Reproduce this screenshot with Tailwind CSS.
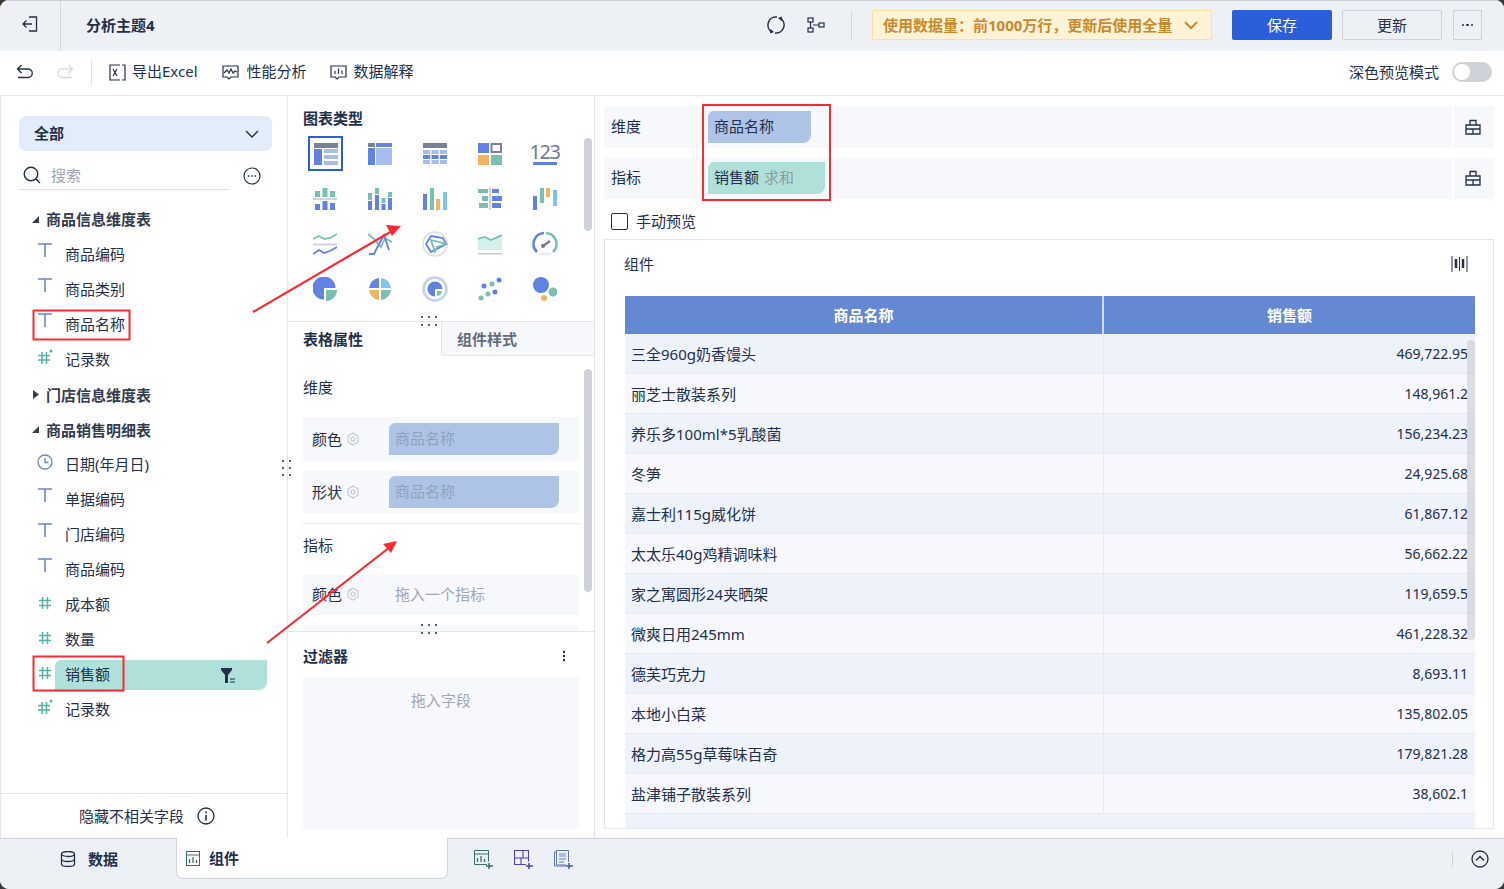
<!DOCTYPE html>
<html lang="zh">
<head>
    <meta charset="UTF-8">
    <title>分析主题4</title>
    <script src="https://cdn.jsdelivr.net/npm/@tailwindcss/browser@4"></script>
</head>
<body class="bg-[#3a3a3a] overflow-hidden">
<div class="relative w-[1504px] h-[889px] flex flex-col overflow-hidden rounded-[9px] bg-white text-[15px] leading-[20px] text-[#232f4b] [font-family:'Noto_Sans','Noto_Sans_CJK_SC',sans-serif]">

    <!-- top bar -->
    <div class="h-[51px] shrink-0 flex items-center bg-[#edf0f5] border-t border-[#c9ccd3]">
        <div class="w-[61px] h-full flex items-center justify-center pb-[4px] border-r border-[#d5d8e0]">
            <svg width="18" height="18" viewBox="0 0 18 18" fill="none" stroke="#232f4b" stroke-width="1.3"><path d="M8 2h7.500v14H8"/><path d="M11 9H2M5.500 5.500 2 9l3.500 3.500"/></svg>
        </div>
        <div class="ml-[25px] -mt-[2px] font-bold">分析主题4</div>
        <div class="ml-auto -mt-[2px] flex items-center">
            <svg width="20" height="20" viewBox="0 0 20 20"><g fill="none" stroke="#232f4b" stroke-width="1.500"><path d="M11 2.100A8 8 0 0 0 6 17"/><path d="M9 17.900A8 8 0 0 0 14 3"/></g><path d="m4.500 14 3.500 3-4 1.500zM15.500 6 12 3l4-1.500z" fill="#232f4b"/></svg>
            <svg class="ml-[21px]" width="18" height="18" viewBox="0 0 18 18" fill="none" stroke="#232f4b" stroke-width="1.200"><rect x="1" y="2" width="5" height="4"/><rect x="1" y="12" width="5" height="4"/><rect x="12" y="7" width="5" height="4"/><path d="M3.500 6v6M6 9h6"/></svg>
            <div class="ml-[26px] w-px h-[29px] bg-[#d5d8e0]"></div>
            <div class="ml-[20px] w-[340px] h-[30px] flex items-center justify-between pl-[10px] pr-[13px] bg-[#fef3d6] border border-[#fcdf9c] rounded-[2px] font-bold text-[#c98a2e]">
                <span>使用数据量：前1000万行，更新后使用全量</span>
                <svg width="14" height="9" viewBox="0 0 14 9" fill="none" stroke="#c98a2e" stroke-width="2"><path d="m1 1 6 6 6-6"/></svg>
            </div>
            <div class="ml-[20px] w-[100px] h-[30px] flex items-center justify-center bg-[#2b5fd9] rounded-[2px] text-white">保存</div>
            <div class="ml-[10px] w-[100px] h-[30px] flex items-center justify-center border border-[#ced2da] rounded-[2px]">更新</div>
            <div class="ml-[11px] mr-[22px] w-[29px] h-[30px] flex items-center justify-center gap-[2px] border border-[#ced2da]">
                <span class="size-[2.5px] bg-[#232f4b] rounded-full"></span><span class="size-[2.5px] bg-[#232f4b] rounded-full"></span><span class="size-[2.5px] bg-[#232f4b] rounded-full"></span>
            </div>
        </div>
    </div>

    <!-- toolbar -->
    <div class="h-[45px] shrink-0 flex items-center border-b border-[#e3e5ec] pl-[16px] pb-[2px]">
        <svg width="18" height="16" viewBox="0 0 18 16" fill="none" stroke="#232f4b" stroke-width="1.400"><path d="M5.500 1 1.500 5l4 4M2 5h10a4 4 0 0 1 0 8.500H2"/></svg>
        <svg class="ml-[22px]" width="18" height="16" viewBox="0 0 18 16" fill="none" stroke="#d9dce3" stroke-width="1.400"><path d="m12.500 1 4 4-4 4M16 5H6a4 4 0 0 0 0 8.500h10"/></svg>
        <div class="ml-[17px] w-px h-[25px] bg-[#dfe2e8]"></div>
        <svg class="ml-[17px]" width="17" height="17" viewBox="0 0 17 17" fill="none" stroke="#232f4b" stroke-width="1.200"><path d="M11 1H1v15h10M13 1h3v15h-3"/><path d="m4 5 4 7M8 5l-4 7"/></svg>
        <span class="ml-[6px] -mt-[2px]">导出Excel</span>
        <svg class="ml-[24px]" width="17" height="17" viewBox="0 0 17 17" fill="none" stroke="#232f4b" stroke-width="1.200"><path d="M5 13H1V2h15v11H9l-2 2z"/><path d="m2 9 3-3 2 3 2-4 2 4 2-2 2 1"/></svg>
        <span class="ml-[8px] -mt-[2px]">性能分析</span>
        <svg class="ml-[23px]" width="17" height="17" viewBox="0 0 17 17" fill="none" stroke="#232f4b" stroke-width="1.200"><path d="M5 13H1V2h15v11H9l-2 2z"/><path d="M5 7v3M8.500 4.500V10M12 6.500V10"/></svg>
        <span class="ml-[7px] -mt-[2px]">数据解释</span>
        <span class="ml-auto">深色预览模式</span>
        <div class="ml-[13px] mr-[12px] w-[40px] h-[20px] rounded-full bg-[#cfd2d8] flex items-center pl-[2px]"><div class="size-[16px] rounded-full bg-white"></div></div>
    </div>

    <!-- main -->
    <div class="flex-1 min-h-0 flex">

        <!-- field list -->
        <div class="w-[288px] shrink-0 flex flex-col border-r border-l border-[#e3e5ec]">
            <div class="ml-[18px] mt-[20px] w-[253px] h-[35px] shrink-0 flex items-center justify-between pl-[15px] pr-[13px] bg-[#e3ecfb] rounded-[7px] font-bold">
                <span class="-mt-[2px]">全部</span>
                <svg width="14" height="8" viewBox="0 0 14 8" fill="none" stroke="#232f4b" stroke-width="1.400"><path d="m1 1 6 6 6-6"/></svg>
            </div>
            <div class="flex shrink-0 items-center">
                <div class="ml-[17px] w-[212px] h-[39px] flex items-center border-b border-[#dfe1ea] pl-[5px] pt-[10px]">
                    <svg width="18" height="18" viewBox="0 0 18 18" fill="none" stroke="#232f4b" stroke-width="1.400"><circle cx="8" cy="8" r="6.800"/><path d="m13 13 4 4"/></svg>
                    <span class="ml-[10px] text-[#a0a6b3]">搜索</span>
                </div>
                <svg class="ml-[13px] mt-[10px]" width="18" height="18" viewBox="0 0 18 18" fill="none" stroke="#232f4b" stroke-width="1.200"><circle cx="9" cy="9" r="8"/><path d="M5 9h1.500M8.300 9h1.500M11.500 9H13" stroke-width="1.500"/></svg>
            </div>
            <div class="mt-[12px] flex flex-col">
                <div class="h-[34px] flex items-center pl-[31px] font-bold text-[#333c50]">
                    <svg width="7" height="7" viewBox="0 0 7 7"><path d="M7 0v7H0z" fill="#333c50"/></svg><span class="ml-[7px]">商品信息维度表</span>
                </div>
                <div class="h-[35px] flex items-center pl-[36px]">
                    <svg class="-mt-[8px]" width="16" height="14" viewBox="0 0 16 14" fill="none" stroke="#6d87c8" stroke-width="1.600"><path d="M1 1h14M8 1v13"/></svg><span class="ml-[12px]">商品编码</span>
                </div>
                <div class="h-[35px] flex items-center pl-[36px]">
                    <svg class="-mt-[8px]" width="16" height="14" viewBox="0 0 16 14" fill="none" stroke="#6d87c8" stroke-width="1.600"><path d="M1 1h14M8 1v13"/></svg><span class="ml-[12px]">商品类别</span>
                </div>
                <div class="h-[35px] flex items-center pl-[36px]">
                    <svg class="-mt-[8px]" width="16" height="14" viewBox="0 0 16 14" fill="none" stroke="#6d87c8" stroke-width="1.600"><path d="M1 1h14M8 1v13"/></svg><span class="ml-[12px]">商品名称</span>
                </div>
                <div class="h-[35px] flex items-center pl-[36px]">
                    <svg class="-mt-[3px]" width="16" height="16" viewBox="0 0 16 16" fill="none" stroke="#4fb5a4" stroke-width="1.500"><path d="M1 6.500h12M1 11h12M5 3v12M9.500 3v12"/><circle cx="14" cy="2" r="1.500" fill="#4fb5a4" stroke="none"/></svg><span class="ml-[12px]">记录数</span>
                </div>
                <div class="h-[35px] flex items-center pl-[31px] pt-[2px] font-bold text-[#333c50]">
                    <svg width="7" height="9" viewBox="0 0 7 9"><path d="m1 0 6 4.500L1 9z" fill="#333c50"/></svg><span class="ml-[7px]">门店信息维度表</span>
                </div>
                <div class="h-[35px] flex items-center pl-[31px] pt-[2px] font-bold text-[#333c50]">
                    <svg width="7" height="7" viewBox="0 0 7 7"><path d="M7 0v7H0z" fill="#333c50"/></svg><span class="ml-[7px]">商品销售明细表</span>
                </div>
                <div class="h-[35px] flex items-center pl-[36px]">
                    <svg class="-mt-[4px]" width="16" height="16" viewBox="0 0 16 16" fill="none" stroke="#6d87c8" stroke-width="1.300"><circle cx="8" cy="8" r="7"/><path d="M8 4v4.500h3.500"/></svg><span class="ml-[12px]">日期(年月日)</span>
                </div>
                <div class="h-[35px] flex items-center pl-[36px]">
                    <svg class="-mt-[8px]" width="16" height="14" viewBox="0 0 16 14" fill="none" stroke="#6d87c8" stroke-width="1.600"><path d="M1 1h14M8 1v13"/></svg><span class="ml-[12px]">单据编码</span>
                </div>
                <div class="h-[35px] flex items-center pl-[36px]">
                    <svg class="-mt-[8px]" width="16" height="14" viewBox="0 0 16 14" fill="none" stroke="#6d87c8" stroke-width="1.600"><path d="M1 1h14M8 1v13"/></svg><span class="ml-[12px]">门店编码</span>
                </div>
                <div class="h-[35px] flex items-center pl-[36px]">
                    <svg class="-mt-[8px]" width="16" height="14" viewBox="0 0 16 14" fill="none" stroke="#6d87c8" stroke-width="1.600"><path d="M1 1h14M8 1v13"/></svg><span class="ml-[12px]">商品编码</span>
                </div>
                <div class="h-[35px] flex items-center pl-[36px]">
                    <svg class="-mt-[1px]" width="16" height="16" viewBox="0 0 16 16" fill="none" stroke="#4fb5a4" stroke-width="1.500"><path d="M2 5.500h12M2 10.500h12M5.500 2v12M10.500 2v12"/></svg><span class="ml-[12px]">成本额</span>
                </div>
                <div class="h-[35px] flex items-center pl-[36px]">
                    <svg class="-mt-[1px]" width="16" height="16" viewBox="0 0 16 16" fill="none" stroke="#4fb5a4" stroke-width="1.500"><path d="M2 5.500h12M2 10.500h12M5.500 2v12M10.500 2v12"/></svg><span class="ml-[12px]">数量</span>
                </div>
                <div class="h-[35px] flex items-center pl-[36px]">
                    <svg class="-mt-[1px]" width="16" height="16" viewBox="0 0 16 16" fill="none" stroke="#4fb5a4" stroke-width="1.500"><path d="M2 5.500h12M2 10.500h12M5.500 2v12M10.500 2v12"/></svg>
                    <div class="ml-[2px] mt-[3px] w-[212px] h-[30px] flex items-center justify-between pl-[10px] pr-[31px] bg-[#b0e0da] rounded-br-[8px] rounded-tl-[6px]">
                        <span class="-mt-[2px]">销售额</span>
                        <svg width="15" height="17" viewBox="0 0 15 17"><path d="M0 1h11v2L7 8v8H4V8L0 3z" fill="#232f4b"/><path d="M9 12h5M9 15h5" stroke="#232f4b" stroke-width="1.200"/></svg>
                    </div>
                </div>
                <div class="h-[35px] flex items-center pl-[36px]">
                    <svg class="-mt-[3px]" width="16" height="16" viewBox="0 0 16 16" fill="none" stroke="#4fb5a4" stroke-width="1.500"><path d="M1 6.500h12M1 11h12M5 3v12M9.500 3v12"/><circle cx="14" cy="2" r="1.500" fill="#4fb5a4" stroke="none"/></svg><span class="ml-[12px]">记录数</span>
                </div>
            </div>
            <div class="mt-auto h-[45px] shrink-0 flex items-center justify-center border-t border-[#e3e5ec] pl-[6px]">
                <span>隐藏不相关字段</span>
                <svg class="ml-[13px]" width="18" height="18" viewBox="0 0 18 18" fill="none" stroke="#232f4b" stroke-width="1.300"><circle cx="9" cy="9" r="8"/><path d="M9 8v5.500M9 4.500v1.800" stroke-width="1.600"/></svg>
            </div>
        </div>

        <!-- chart settings -->
        <div class="relative w-[307px] shrink-0 flex flex-col border-r border-[#e3e5ec]">
            <!-- chart types -->
            <div class="relative h-[226px] shrink-0 border-b border-[#e3e5ec] pt-[12px] overflow-hidden">
                <div class="pl-[15px] h-[20px] font-bold">图表类型</div>
                <div class="absolute right-[2px] top-[42px] w-[8px] h-[93px] rounded-full bg-[#cfd2d9]"></div>
                <div class="mt-[3px] ml-[9px] grid grid-cols-[repeat(5,55px)] auto-rows-[45px] place-items-center">
                    <div class="ml-[2px] size-[35px] flex items-center justify-center border-2 border-[#2b5fd9]">
                        <svg width="24" height="22" viewBox="0 0 24 22"><rect width="24" height="5" fill="#788296"/><rect y="6" width="8" height="16" fill="#6182e0"/><rect x="10" y="6" width="14" height="4" fill="#a8bcef"/><rect x="10" y="12" width="14" height="4" fill="#a8bcef"/><rect x="10" y="18" width="14" height="4" fill="#a8bcef"/></svg>
                    </div>
                    <svg width="24" height="22" viewBox="0 0 24 22"><rect width="7" height="4" fill="#788296"/><rect x="8" width="16" height="4" fill="#6182e0"/><rect y="5" width="7" height="17" fill="#6182e0"/><rect x="8" y="5" width="16" height="17" fill="#a8bcef"/></svg>
                    <svg width="24" height="22" viewBox="0 0 24 22"><rect width="24" height="5" fill="#788296"/><path d="M0 7h7v4H0zM8.500 7h7v4h-7zM17 7h7v4h-7zM0 17h7v4H0zM8.500 17h7v4h-7zM17 17h7v4h-7z" fill="#a8bcef"/><path d="M0 12h7v4H0zM8.500 12h7v4h-7zM17 12h7v4h-7z" fill="#6182e0"/></svg>
                    <svg width="24" height="22" viewBox="0 0 24 22"><rect width="11" height="10" fill="#6182e0"/><rect x="13.500" y="1" width="9.500" height="8" fill="none" stroke="#7a8496" stroke-width="2"/><rect y="12" width="11" height="10" fill="#efb562"/><rect x="13" y="12" width="11" height="10" fill="#7abfb5"/></svg>
                    <div class="w-[24px] flex flex-col items-center">
                        <span class="text-[20px] leading-[19px] tracking-[-1.5px] text-[#6f7a90]">123</span>
                        <span class="w-full h-[3px] mt-[1px] bg-[#6182e0]"></span>
                    </div>

                    <svg width="24" height="22" viewBox="0 0 24 22"><rect y="10" width="24" height="2" fill="#cfd3da"/><path d="M2 3h5v6H2zM9.500 0h5v9h-5zM17 3h5v6h-5z" fill="#7abfb5"/><path d="M2 16h5v6H2zM9.500 13h5v9h-5zM17 15h5v7h-5z" fill="#6182e0"/></svg>
                    <svg width="24" height="22" viewBox="0 0 24 22"><path d="M0 5h4v7H0zM7 0h4v6H7zM13.500 10h4v5h-4zM20 4h4v5h-4z" fill="#7abfb5"/><path d="M0 13h4v9H0zM7 7h4v15H7zM13.500 16h4v6h-4zM20 10h4v12h-4z" fill="#6182e0"/></svg>
                    <svg width="24" height="22" viewBox="0 0 24 22"><rect y="6" width="4" height="16" fill="#6182e0"/><rect x="7" width="4" height="22" fill="#7abfb5"/><rect x="13" y="11" width="4" height="11" fill="#efb562"/><rect x="20" y="4" width="4" height="18" fill="#7cc4f2"/></svg>
                    <svg width="24" height="22" viewBox="0 0 24 22"><rect x="11" width="2" height="22" fill="#cfd3da"/><path d="M0 1h10v4H0zM4 8h6v5H4zM1 15h9v5H1z" fill="#7abfb5"/><path d="M14 1h7v4h-7zM14 8h10v5H14zM14 15h9v5h-9z" fill="#6182e0"/></svg>
                    <svg width="24" height="22" viewBox="0 0 24 22"><rect y="8" width="4" height="14" fill="#6182e0"/><rect x="7" width="4" height="15" fill="#7abfb5"/><rect x="13" width="4" height="9" fill="#efb562"/><rect x="20" y="2" width="4" height="16" fill="#7cc4f2"/></svg>

                    <svg width="24" height="22" viewBox="0 0 24 22" fill="none" stroke-width="1.800"><path d="m0 6 6-3 5 3 6-1 7-4" stroke="#7abfb5"/><path d="M0 11.500h24" stroke="#cfd3da" stroke-width="2"/><path d="m0 21 6-4 5 3 6-2 7-4" stroke="#6182e0"/></svg>
                    <svg width="24" height="22" viewBox="0 0 24 22" fill="none" stroke-width="1.800"><path d="M0 1l6 5 7 8 4-9 7 4" stroke="#7abfb5"/><path d="M1 21h5l4-8 6-11 5 15" stroke="#6182e0"/></svg>
                    <svg width="26" height="26" viewBox="0 0 26 26" fill="none"><circle cx="13" cy="13" r="12" stroke="#dadde3" stroke-width="1.500"/><path d="M4 13 9 5l12 2 3 6-15 8z" stroke="#6182e0" stroke-width="1.800"/><path d="m9 9 15 4-9 3-2 5z" stroke="#7abfb5" stroke-width="1.800"/></svg>
                    <svg width="24" height="22" viewBox="0 0 24 22"><path d="m0 6 7-2 6 3 11-5v15H0z" fill="#d5efeb"/><path d="m0 6 7-2 6 3 11-5" fill="none" stroke="#7abfb5" stroke-width="1.800"/><rect y="20" width="24" height="1.500" fill="#c2c7d2"/></svg>
                    <svg width="26" height="26" viewBox="0 0 26 26" fill="none" stroke-width="2.500"><path d="M5 21A11 11 0 0 1 12 2" stroke="#6182e0"/><path d="M14 2a11 11 0 0 1 7 19" stroke="#7abfb5"/><path d="M7 23h12" stroke="#e9ebef"/><path d="M11 15l7-5" stroke="#6f7a90" stroke-width="2.200"/><circle cx="11" cy="15" r="2" fill="#6f7a90" stroke="none"/></svg>

                    <svg width="24" height="24" viewBox="0 0 24 24"><path d="M11 11H22.500A11.500 11.500 0 1 0 11 22.500z" fill="#6182e0"/><path d="M13 13H24A11 11 0 0 1 13 24z" fill="#7abfb5"/></svg>
                    <svg width="24" height="24" viewBox="0 0 24 24"><path d="M11 1v10H1A11 11 0 0 1 11 1z" fill="#6182e0"/><path d="M13 1a11 11 0 0 1 10 10H13z" fill="#7cc4f2"/><path d="M11 13v10A11 11 0 0 1 1 13z" fill="#efb562"/><path d="M13 13h10a11 11 0 0 1-10 10z" fill="#7abfb5"/></svg>
                    <svg width="26" height="26" viewBox="0 0 26 26" fill="none"><circle cx="13" cy="13" r="11.500" stroke="#c3d0f3" stroke-width="2.500"/><path d="M13 13H20.500A7.500 7.500 0 1 0 13 20.500z" fill="#6182e0"/><path d="M15 15h5a5.500 5.500 0 0 1-5 5z" fill="#7abfb5"/><path d="M24 15a11 11 0 0 1-9 9" stroke="#bfe2dc" stroke-width="2.500"/></svg>
                    <svg width="24" height="24" viewBox="0 0 24 24"><circle cx="21" cy="3" r="2.500" fill="#6182e0"/><circle cx="14" cy="7" r="2.500" fill="#7abfb5"/><circle cx="6" cy="9" r="2.500" fill="#6182e0"/><circle cx="17" cy="15" r="2.500" fill="#6182e0"/><circle cx="10" cy="17" r="2.500" fill="#7abfb5"/><circle cx="3" cy="21" r="2.500" fill="#7abfb5"/></svg>
                    <svg width="24" height="24" viewBox="0 0 24 24"><circle cx="8" cy="8" r="8" fill="#6182e0"/><circle cx="20" cy="15" r="4.500" fill="#7abfb5"/><circle cx="11" cy="21" r="3" fill="#efb562"/></svg>
                </div>
            </div>

            <!-- properties -->
            <div class="relative h-[310px] shrink-0 border-b border-[#e3e5ec] overflow-hidden">
                <div class="flex h-[34px]">
                    <div class="w-[153px] flex items-center pl-[15px] font-bold">表格属性</div>
                    <div class="flex-1 flex items-center pl-[15px] bg-[#f7f8fc] border-l border-b border-[#e3e5ec] rounded-bl-[4px] font-bold text-[#636c7e]">组件样式</div>
                </div>
                <div class="absolute right-[2px] top-[47px] w-[8px] h-[223px] rounded-full bg-[#cfd2d9]"></div>
                <div class="pl-[15px] w-[291px] flex flex-col">
                    <div class="h-[61px] flex items-center">维度</div>
                    <div class="h-[44px] flex items-center pl-[9px] bg-[#f7f8fc]">
                        <span>颜色</span>
                        <svg class="ml-[4px]" width="14" height="14" viewBox="0 0 14 14" fill="none" stroke="#c2c6cf" stroke-width="1.100"><path d="M7 1l5 3v6l-5 3-5-3V4z"/><circle cx="7" cy="7" r="2"/></svg>
                        <div class="ml-[29px] w-[170px] h-[32px] flex items-center pl-[6px] pb-[2px] bg-[#aec4e6] rounded-br-[8px] rounded-tl-[6px] text-[#8fa1bd]">商品名称</div>
                    </div>
                    <div class="mt-[10px] h-[42px] flex items-center pl-[9px] bg-[#f7f8fc]">
                        <span>形状</span>
                        <svg class="ml-[4px]" width="14" height="14" viewBox="0 0 14 14" fill="none" stroke="#c2c6cf" stroke-width="1.100"><path d="M7 1l5 3v6l-5 3-5-3V4z"/><circle cx="7" cy="7" r="2"/></svg>
                        <div class="ml-[29px] w-[170px] h-[32px] flex items-center pl-[6px] pb-[2px] bg-[#aec4e6] rounded-br-[8px] rounded-tl-[6px] text-[#8fa1bd]">商品名称</div>
                    </div>
                    <div class="mt-[10px] border-t border-[#e3e5ec] h-[52px] flex items-center pb-[9px]">指标</div>
                    <div class="h-[40px] flex items-center pl-[9px] pb-[2px] bg-[#f7f8fc]">
                        <span>颜色</span>
                        <svg class="ml-[4px]" width="14" height="14" viewBox="0 0 14 14" fill="none" stroke="#c2c6cf" stroke-width="1.100"><path d="M7 1l5 3v6l-5 3-5-3V4z"/><circle cx="7" cy="7" r="2"/></svg>
                        <span class="ml-[35px] text-[#a0a6b3]">拖入一个指标</span>
                    </div>
                    <div class="mt-[10px] h-[20px] bg-[#f7f8fc]"></div>
                </div>
            </div>

            <!-- filter -->
            <div class="flex-1 min-h-0 flex flex-col px-[15px]">
                <div class="h-[45px] shrink-0 flex items-center justify-between pt-[3px] font-bold">
                    <span>过滤器</span>
                    <svg class="mr-[13px]" width="4" height="12" viewBox="0 0 4 12" fill="#232f4b"><circle cx="2" cy="2" r="1.200"/><circle cx="2" cy="6" r="1.200"/><circle cx="2" cy="10" r="1.200"/></svg>
                </div>
                <div class="h-[152px] w-[276px] flex justify-center pt-[13px] bg-[#f7f8fc] text-[#a0a6b3]">拖入字段</div>
            </div>

            <!-- resize handles -->
            <svg class="absolute left-[132px] top-[219px]" width="18" height="12" viewBox="0 0 18 12" fill="#232f4b"><circle cx="2" cy="2" r="1"/><circle cx="9" cy="2" r="1"/><circle cx="16" cy="2" r="1"/><circle cx="2" cy="10" r="1"/><circle cx="9" cy="10" r="1"/><circle cx="16" cy="10" r="1"/></svg>
            <svg class="absolute left-[132px] top-[527px]" width="18" height="12" viewBox="0 0 18 12" fill="#232f4b"><circle cx="2" cy="2" r="1"/><circle cx="9" cy="2" r="1"/><circle cx="16" cy="2" r="1"/><circle cx="2" cy="10" r="1"/><circle cx="9" cy="10" r="1"/><circle cx="16" cy="10" r="1"/></svg>
            <svg class="absolute -left-[7px] top-[363px]" width="12" height="18" viewBox="0 0 12 18" fill="#232f4b"><circle cx="2" cy="2" r="1"/><circle cx="2" cy="9" r="1"/><circle cx="2" cy="16" r="1"/><circle cx="9" cy="2" r="1"/><circle cx="9" cy="9" r="1"/><circle cx="9" cy="16" r="1"/></svg>
        </div>

        <!-- preview -->
        <div class="flex-1 min-w-0 flex flex-col pl-[9px] pr-[10px] pt-[10px]">
            <div class="h-[42px] shrink-0 flex items-center bg-[#f7f8fc] pl-[7px]">
                <span class="w-[97px] -mt-[2px]">维度</span>
                <div class="w-[103px] h-[32px] flex items-center pl-[6px] pb-[2px] bg-[#aec4e6] rounded-br-[8px] rounded-tl-[6px]">商品名称</div>
                <div class="ml-auto w-[42px] h-full flex items-center justify-center pr-[2px] border-l-2 border-white">
                    <svg width="16" height="16" viewBox="0 0 16 16" fill="none" stroke="#232f4b" stroke-width="1.300"><path d="M1 6h14v9H1zM5 6V1.500h6V6M1 10h14M8 10v5"/></svg>
                </div>
            </div>
            <div class="mt-[10px] h-[41px] shrink-0 flex items-center bg-[#f7f8fc] pl-[7px] pb-[1px]">
                <span class="w-[97px] -mt-[2px]">指标</span>
                <div class="w-[117px] h-[32px] flex items-center pl-[6px] pb-[2px] bg-[#b0e0da] rounded-br-[8px] rounded-tl-[6px]">销售额<span class="ml-[5px] text-[#8d9aa0]">求和</span></div>
                <div class="ml-auto w-[42px] h-full flex items-center justify-center pr-[2px] border-l-2 border-white">
                    <svg width="16" height="16" viewBox="0 0 16 16" fill="none" stroke="#232f4b" stroke-width="1.300"><path d="M1 6h14v9H1zM5 6V1.500h6V6M1 10h14M8 10v5"/></svg>
                </div>
            </div>
            <div class="h-[40px] shrink-0 flex items-center pl-[7px] pt-[4px]">
                <div class="size-[17px] border border-[#232f4b] rounded-[2px]"></div>
                <span class="ml-[8px]">手动预览</span>
            </div>
            <div class="relative h-[590px] shrink-0 border border-[#e3e5ec] pl-[20px] pr-[18px] overflow-hidden">
                <div class="h-[56px] flex items-center justify-between -ml-px pr-[7px] pb-[8px]">
                    <span>组件</span>
                    <svg width="17" height="16" viewBox="0 0 17 16" fill="none" stroke="#232f4b"><path d="M1 0v16M16 0v16" stroke-width="1"/><path d="M5 3v9M12 3v9" stroke-width="2.500"/><path d="M8.500 1v14" stroke-width="1"/></svg>
                </div>
                <div class="w-[850px]">
                    <div class="grid grid-cols-[479px_371px] h-[38px] bg-[#6488d2] text-white font-bold items-center text-center">
                        <div class="h-full flex items-center justify-center border-r-2 border-white/70">商品名称</div>
                        <div>销售额</div>
                    </div>
                    <div class="grid grid-cols-[479px_371px] h-[40px] items-center bg-[#eef2fa] border-b border-[#e6eaf3]"><div class="h-full flex items-center pl-[6px] border-r border-[#e6eaf3]">三全960g奶香馒头</div><div class="text-[14px] text-right pr-[7px]">469,722.95</div></div>
                    <div class="grid grid-cols-[479px_371px] h-[40px] items-center bg-[#f7f8fd] border-b border-[#e6eaf3]"><div class="h-full flex items-center pl-[6px] border-r border-[#e6eaf3]">丽芝士散装系列</div><div class="text-[14px] text-right pr-[7px]">148,961.2</div></div>
                    <div class="grid grid-cols-[479px_371px] h-[40px] items-center bg-[#eef2fa] border-b border-[#e6eaf3]"><div class="h-full flex items-center pl-[6px] border-r border-[#e6eaf3]">养乐多100ml*5乳酸菌</div><div class="text-[14px] text-right pr-[7px]">156,234.23</div></div>
                    <div class="grid grid-cols-[479px_371px] h-[40px] items-center bg-[#f7f8fd] border-b border-[#e6eaf3]"><div class="h-full flex items-center pl-[6px] border-r border-[#e6eaf3]">冬笋</div><div class="text-[14px] text-right pr-[7px]">24,925.68</div></div>
                    <div class="grid grid-cols-[479px_371px] h-[40px] items-center bg-[#eef2fa] border-b border-[#e6eaf3]"><div class="h-full flex items-center pl-[6px] border-r border-[#e6eaf3]">嘉士利115g威化饼</div><div class="text-[14px] text-right pr-[7px]">61,867.12</div></div>
                    <div class="grid grid-cols-[479px_371px] h-[40px] items-center bg-[#f7f8fd] border-b border-[#e6eaf3]"><div class="h-full flex items-center pl-[6px] border-r border-[#e6eaf3]">太太乐40g鸡精调味料</div><div class="text-[14px] text-right pr-[7px]">56,662.22</div></div>
                    <div class="grid grid-cols-[479px_371px] h-[40px] items-center bg-[#eef2fa] border-b border-[#e6eaf3]"><div class="h-full flex items-center pl-[6px] border-r border-[#e6eaf3]">家之寓圆形24夹晒架</div><div class="text-[14px] text-right pr-[7px]">119,659.5</div></div>
                    <div class="grid grid-cols-[479px_371px] h-[40px] items-center bg-[#f7f8fd] border-b border-[#e6eaf3]"><div class="h-full flex items-center pl-[6px] border-r border-[#e6eaf3]">微爽日用245mm</div><div class="text-[14px] text-right pr-[7px]">461,228.32</div></div>
                    <div class="grid grid-cols-[479px_371px] h-[40px] items-center bg-[#eef2fa] border-b border-[#e6eaf3]"><div class="h-full flex items-center pl-[6px] border-r border-[#e6eaf3]">德芙巧克力</div><div class="text-[14px] text-right pr-[7px]">8,693.11</div></div>
                    <div class="grid grid-cols-[479px_371px] h-[40px] items-center bg-[#f7f8fd] border-b border-[#e6eaf3]"><div class="h-full flex items-center pl-[6px] border-r border-[#e6eaf3]">本地小白菜</div><div class="text-[14px] text-right pr-[7px]">135,802.05</div></div>
                    <div class="grid grid-cols-[479px_371px] h-[40px] items-center bg-[#eef2fa] border-b border-[#e6eaf3]"><div class="h-full flex items-center pl-[6px] border-r border-[#e6eaf3]">格力高55g草莓味百奇</div><div class="text-[14px] text-right pr-[7px]">179,821.28</div></div>
                    <div class="grid grid-cols-[479px_371px] h-[40px] items-center bg-[#f7f8fd] border-b border-[#e6eaf3]"><div class="h-full flex items-center pl-[6px] border-r border-[#e6eaf3]">盐津铺子散装系列</div><div class="text-[14px] text-right pr-[7px]">38,602.1</div></div>
                    <div class="h-[40px] bg-[#eef2fa]"></div>
                </div>
                <div class="absolute left-[862px] top-[100px] w-[8px] h-[300px] rounded-full bg-[#cfd2d9]/70"></div>
            </div>
        </div>
    </div>

    <!-- bottom bar -->
    <div class="h-[51px] shrink-0 flex bg-[#edf0f5] border-t border-[#cfd3dc]">
        <div class="w-[176px] h-[40px] flex items-center pl-[60px] font-bold">
            <svg width="16" height="16" viewBox="0 0 16 16" fill="none" stroke="#232f4b" stroke-width="1.300"><ellipse cx="8" cy="3" rx="6.500" ry="2.500"/><path d="M1.500 3v10c0 1.400 3 2.500 6.500 2.500s6.500-1.100 6.500-2.500V3M1.500 8c0 1.400 3 2.500 6.500 2.500s6.500-1.100 6.500-2.500"/></svg>
            <span class="ml-[12px]">数据</span>
        </div>
        <div class="-mt-px w-[272px] h-[41px] flex items-center pl-[9px] bg-white border-x border-b border-[#cfd3dc] rounded-b-[7px] font-bold">
            <svg width="14" height="15" viewBox="0 0 14 15" fill="none" stroke="#3c6e6a" stroke-width="1"><rect x=".5" y=".5" width="13" height="14"/><path d="M.5 4h13"/><path d="M3.500 12V8M7 12V6M10.500 12V9" stroke-width="1.300"/></svg>
            <span class="ml-[9px]">组件</span>
        </div>
        <div class="ml-[26px] h-[40px] flex items-center gap-[21px]">
            <svg width="19" height="19" viewBox="0 0 19 19" fill="none" stroke="#3c6e6a" stroke-width="1"><path d="M13 14.500H.5V.5h14v11M.5 4h14"/><path d="M3.500 12V8M7 12V6M10.500 12V9" stroke-width="1.300"/><path d="M15 13v6M12 16h7" stroke-width="1.500"/></svg>
            <svg width="19" height="19" viewBox="0 0 19 19" fill="none" stroke="#4f3fa6" stroke-width="1.100"><path d="M12 14.500H.5V.5h14v11M.5 8h14M7 8v6.500M9 .5V8"/><path d="M15 13v6M12 16h7" stroke-width="1.500"/></svg>
            <svg width="19" height="19" viewBox="0 0 19 19" fill="none" stroke="#5c76b8" stroke-width="1"><path d="M12 15H2.500V.5h12V12M2.500 2H.5v14H12"/><path d="M5 3h7v4H5z" fill="#a8bcef" stroke="none"/><path d="M5 9h7M5 12h5"/><path d="M15 13v6M12 16h7" stroke-width="1.500" stroke="#3f5a9e"/></svg>
        </div>
        <div class="ml-auto h-[40px] flex items-center pr-[15px]">
            <div class="w-px h-[15px] bg-[#d0d3da] mr-[18px]"></div>
            <svg width="18" height="18" viewBox="0 0 18 18" fill="none" stroke="#232f4b" stroke-width="1.300"><circle cx="9" cy="9" r="8"/><path d="m5 10.500 4-4 4 4" stroke-width="1.500"/></svg>
        </div>
    </div>

    <!-- annotations drawn over the screenshot -->
    <svg class="absolute left-0 top-0 pointer-events-none" width="1504" height="889" fill="none" stroke="#fb2a32" stroke-width="2">
        <rect x="703" y="105" width="127" height="95"/>
        <rect x="33.500" y="310.500" width="96" height="29"/>
        <rect x="33.500" y="656.500" width="90" height="34"/>
        <path d="M253 312 392 231M267 643 390 547" stroke-width="2.200"/>
        <path d="m401 226-15-1 6 11zM397 541l-14 3 8 9z" fill="#fb2a32" stroke="none"/>
    </svg>
</div>
</body>
</html>
